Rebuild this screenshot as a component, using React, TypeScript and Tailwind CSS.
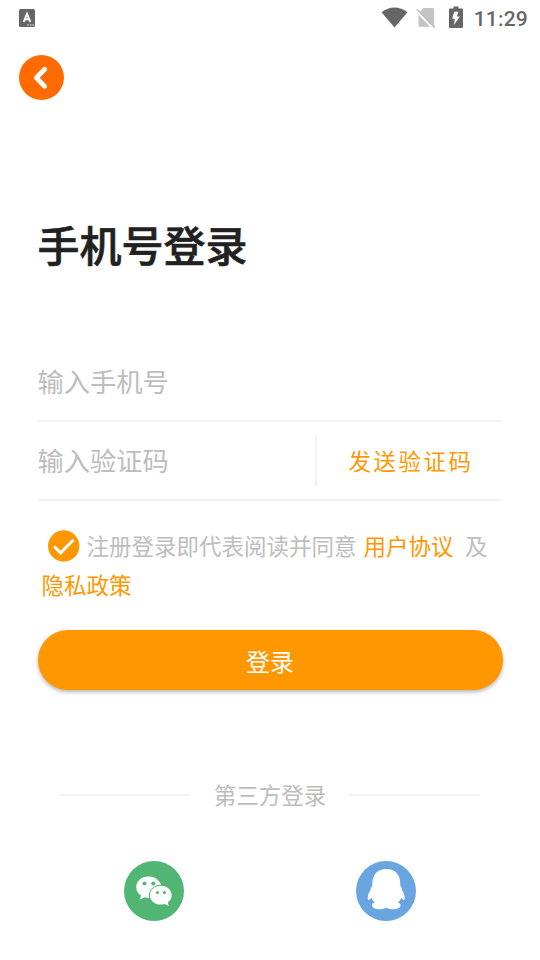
import React from "react";

function StatusBar() {
  return (
    <header className="flex h-9 items-center justify-between pl-[19px] pr-3 text-[#666666]">
      <svg className="h-[18px] w-4" viewBox="0 0 16 18" aria-hidden="true">
        <rect width="16" height="18" rx="1.5" fill="#666666" />
        <path d="M4.600 13 8 4.800l3.400 8.200M5.700 10.300h4.600" fill="none" stroke="#fff" strokeWidth="1.900" />
        <path d="M8.300 16h1.500M11 16h1.500M13.500 16h1.500" stroke="#fff" strokeWidth="1.200" />
      </svg>
      <div className="flex items-center">
        <svg className="h-6 w-[27px]" viewBox="0 0 27 24" aria-hidden="true">
          <path d="M.5 6.200C8.500-.200 18.500-.200 26.500 6.200L13.500 21.600Z" fill="#666666" />
        </svg>
        <svg className="ml-[8px] h-6 w-5" viewBox="0 0 20 24" aria-hidden="true">
          <path d="M8.500 2H17.500Q18.800 2 18.800 3.300V19.500Q18.800 20.800 17.500 20.800H4.500Q3.200 20.800 3.200 19.500V7Z" transform="translate(-.7 0)" fill="#c4c4c4" />
          <path d="M.200 4.800 17.500 22.500" stroke="#fff" strokeWidth="2.400" />
          <path d="M.8 3.300 18.800 21.800" stroke="#bdbdbd" strokeWidth="1.500" />
        </svg>
        <svg className="ml-[13px] h-6 w-[14px]" viewBox="0 0 14 24" aria-hidden="true">
          <path d="M4.500 .500h5v2H13q1 0 1 1V21q0 1-1 1H1q-1 0-1-1V3.500q0-1 1-1h3.500Z" fill="#666666" />
          <path d="M9.500 5.800H5.200L3.200 12.800H6L4.600 19.200 11 10.600H7.800Z" fill="#fff" />
        </svg>
        <time className="ml-[11px] pt-[2px] font-[Roboto] text-[21px] font-medium leading-[34px] tracking-[0.2px]">11:29</time>
      </div>
    </header>
  );
}

function WechatIcon() {
  return (
    <svg className="size-[60px]" viewBox="0 0 60 60" aria-hidden="true">
      <circle cx="30" cy="30" r="30" fill="#51b573" />
      <path d="M24.500 15.500C17.500 15.500 12.200 20.100 12.200 26.200c0 3.500 1.900 6.400 4.900 8.400L15.700 38.600l5.200-2.400c1.400.400 2.700.600 4.200.600 7 0 12.200-4.700 12.200-10.600S31.500 15.500 24.500 15.500Z" fill="#fff" />
      <ellipse cx="36.800" cy="34.300" rx="11.900" ry="10.500" fill="#51b573" />
      <path d="M36.800 24.800c-6.200 0-10.900 4.100-10.900 9.400s4.700 9.400 10.900 9.400c1.400 0 2.700-.200 3.900-.600l4.100 2.100-1.100-3.600c2.500-1.700 4-4.300 4-7.300 0-5.300-4.700-9.400-10.900-9.400Z" fill="#fff" />
      <g fill="#51b573">
        <circle cx="20.500" cy="22.600" r="2" />
        <circle cx="29.300" cy="22.600" r="2" />
        <circle cx="33.500" cy="31.400" r="1.500" />
        <circle cx="40.500" cy="31.400" r="1.500" />
      </g>
    </svg>
  );
}

function QqIcon() {
  return (
    <svg className="size-[60px]" viewBox="0 0 60 60" aria-hidden="true">
      <circle cx="30" cy="30" r="30" fill="#69a5e1" />
      <path
        d="M30.300 8C21.500 8 16.300 14 16.300 22.500V25C15 26.300 14.400 27.500 14.700 29C12.500 32 11.200 35.700 11.900 38.500C12.300 39.900 14.200 38.500 15.400 36.800C15.900 38.500 17 40 18.700 41.400C17 41.800 16 42.800 16 44.300C16 49 27 49.300 30.300 46.500C33.600 49.300 44.600 49 44.600 44.300C44.600 42.800 43.600 41.800 41.900 41.400C43.600 40 44.700 38.500 45.200 36.800C46.400 38.500 48.100 39.900 48.500 38.500C49.200 35.700 48.100 32 45.900 29C46.200 27.500 45.600 26.300 44.300 25V22.500C44.300 14 39.100 8 30.300 8Z"
        fill="#fff"
      />
    </svg>
  );
}

export default function App() {
  return (
    <div className="min-h-[960px] w-[540px] bg-white font-['Noto_Sans_CJK_SC',sans-serif] text-[#212121]">
      <StatusBar />

      <nav className="pl-[19px] pt-[19px]">
        <button aria-label="返回" className="block size-[45px]">
          <svg className="size-[45px]" viewBox="0 0 45 45" aria-hidden="true">
            <circle cx="22.500" cy="22.500" r="22.500" fill="#ff6b00" />
            <path d="M25.700 14.200 17.300 22.800 25.700 31.400" fill="none" stroke="#fff" strokeWidth="4.800" strokeLinecap="round" strokeLinejoin="round" />
          </svg>
        </button>
      </nav>

      <main className="px-[37.5px]">
        <h1 className="mt-[114px] text-[42px] font-medium leading-[60px] [-webkit-text-stroke:0.6px_#212121]">手机号登录</h1>

        <form className="mt-[69px]" onSubmit={(event) => event.preventDefault()}>
          <div className="h-[79px] border-b-2 border-[#f2f2f2]">
            <input
              aria-label="手机号"
              placeholder="输入手机号"
              className="block h-[77px] w-full pb-[2px] text-[26.25px] placeholder:text-[#bdbdbd] focus:outline-none"
            />
          </div>
          <div className="flex h-[79px] items-center border-b-2 border-[#f2f2f2]">
            <input
              aria-label="验证码"
              placeholder="输入验证码"
              className="block h-[77px] w-[277px] pb-[1px] text-[26.25px] placeholder:text-[#bdbdbd] focus:outline-none"
            />
            <div className="h-[50px] w-[2px] bg-[#f2f2f2]" />
            <button className="flex-1 pl-[3px] pt-[1px] text-[22.5px] tracking-[2.5px] text-[#ff9800]">发送验证码</button>
          </div>

          <div className="mt-[25px] h-[79px] pl-[4px] text-[22.5px] leading-[39px] text-[#bdbdbd]">
            <div className="flex items-center">
              <svg className="ml-[6px] mr-[7px] size-8" viewBox="0 0 32 32" aria-hidden="true">
                <circle cx="15.700" cy="16" r="15.700" fill="#ff9800" />
                <path d="m6.200 16.500 6.400 6.300L25.600 9.800" fill="none" stroke="#fff" strokeWidth="3" />
              </svg>
              <span>注册登录即代表阅读并同意</span>
              <a className="ml-[7px] text-[#ff9800]">用户协议</a>
              <span className="ml-[11.5px]">及</span>
            </div>
            <a className="block text-[#ff9800]">隐私政策</a>
          </div>

          <button className="mt-[25px] block h-[60px] w-full rounded-full bg-[#ff9800] pt-[2px] text-[24px] text-white shadow-[0_2px_4px_rgba(0,0,0,0.3)]">
            登录
          </button>
        </form>
      </main>

      <section className="mt-[85px]">
        <div className="flex items-center px-[60px]">
          <div className="h-[2px] flex-1 bg-[#f2f2f2]" />
          <h2 className="px-[22.5px] pb-[2px] text-[22.5px] leading-[38px] text-[#bdbdbd]">第三方登录</h2>
          <div className="h-[2px] flex-1 bg-[#f2f2f2]" />
        </div>
        <div className="mt-[46px] flex justify-between px-[124px]">
          <button aria-label="微信登录">
            <WechatIcon />
          </button>
          <button aria-label="QQ登录">
            <QqIcon />
          </button>
        </div>
      </section>
    </div>
  );
}
